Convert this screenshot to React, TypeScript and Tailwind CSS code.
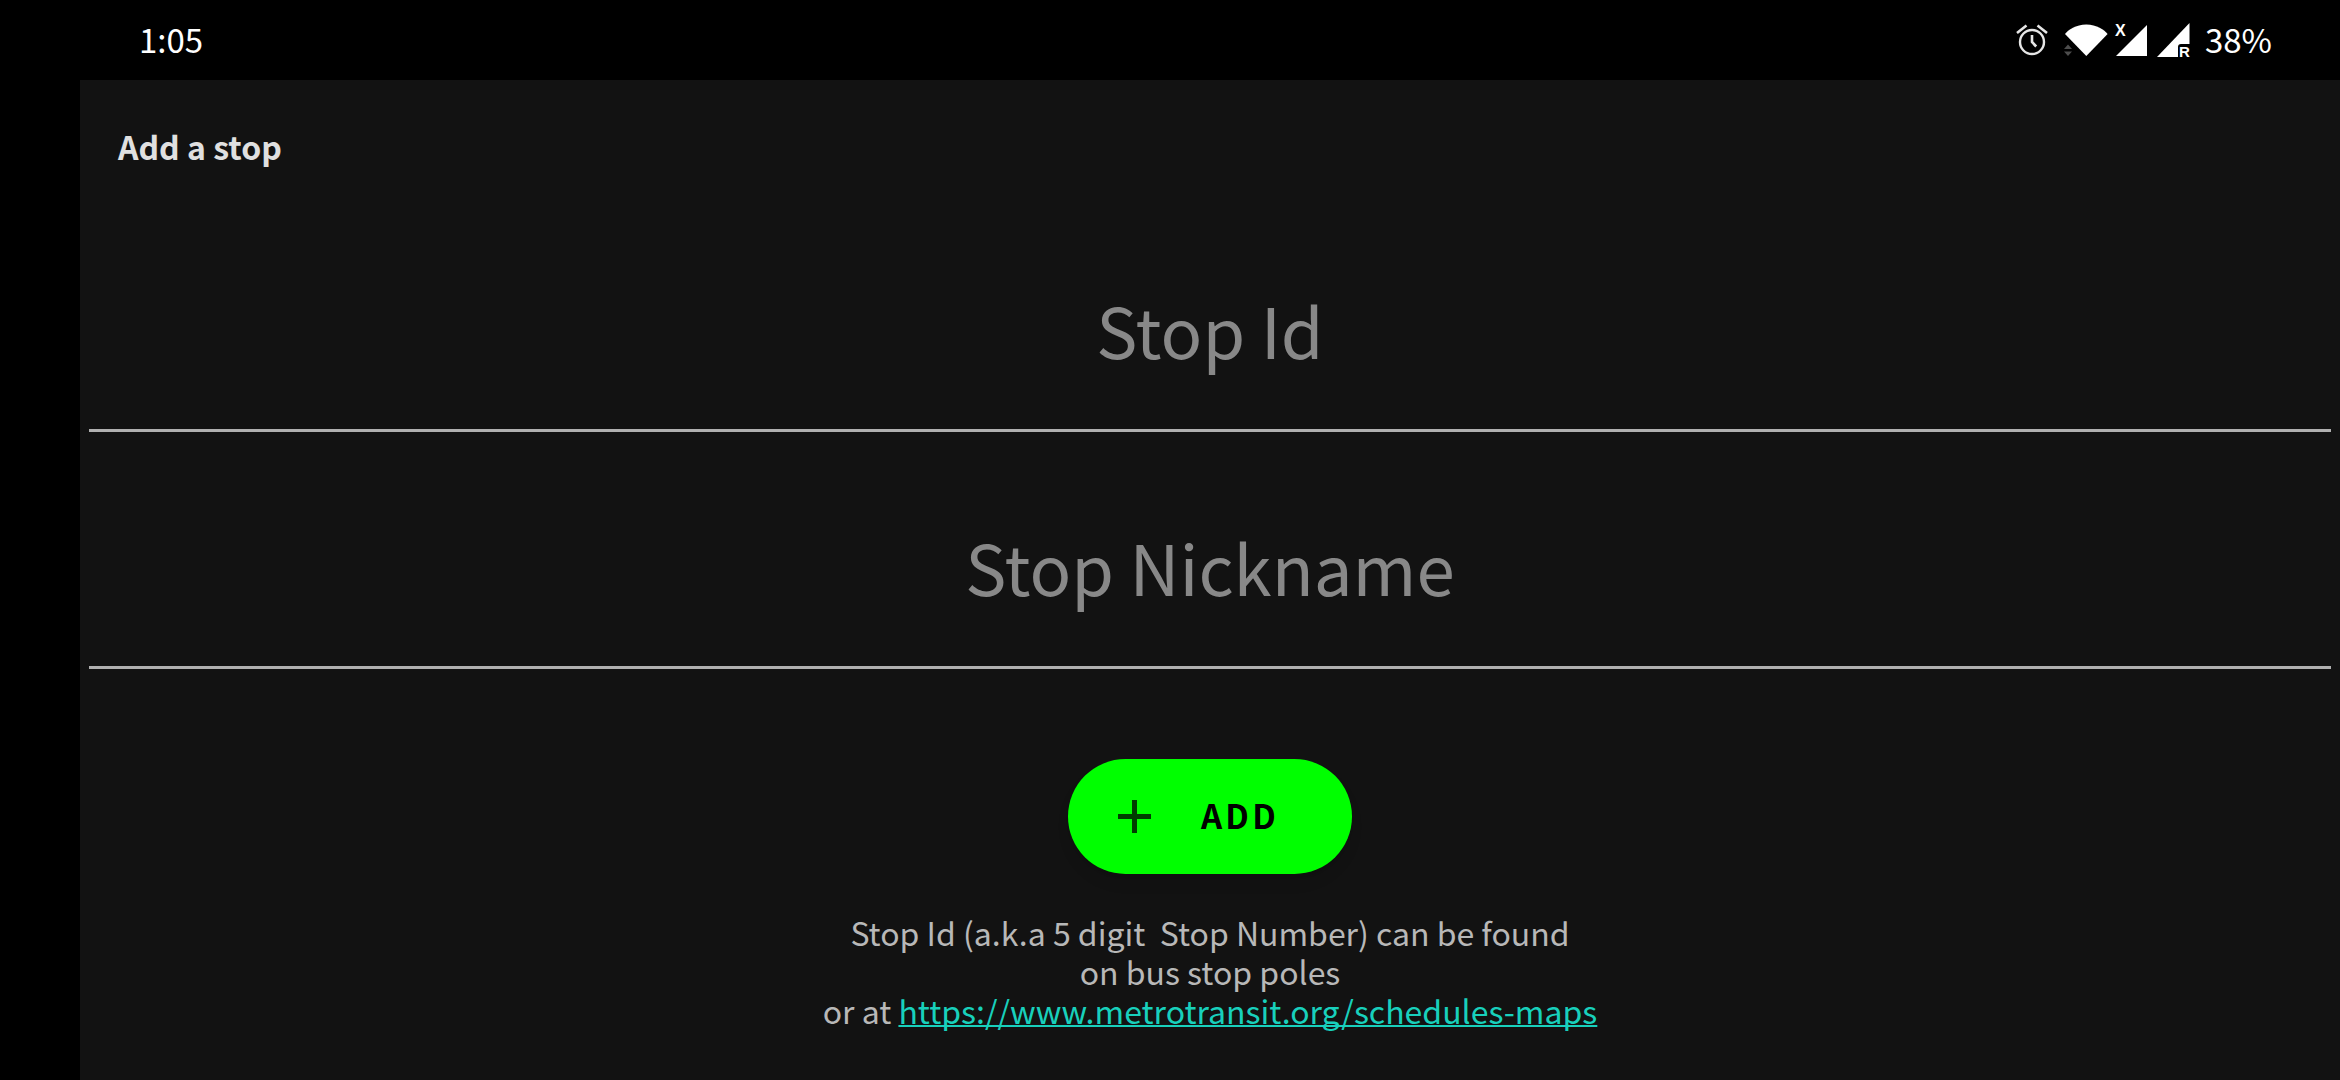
import React from "react";

function AlarmIcon() {
  return (
    <svg width="32" height="32" viewBox="0 0 32 32" fill="none" stroke="#e6e6e6" aria-hidden="true">
      <circle cx="16" cy="18" r="12" strokeWidth="2.4" />
      <path d="M16 11V18L20.200 22.500" strokeWidth="2.600" />
      <path d="M1 9L10.500 1.500M31 9L21.500 1.500" strokeWidth="2.600" />
    </svg>
  );
}

function WifiIcon() {
  return (
    <svg width="44" height="34" viewBox="0 0 44 34" aria-hidden="true">
      <path d="M1 11C4 7 12 1.500 22.300 1.500S40.500 7 43.600 11L22.300 33Z" fill="#fff" />
      <path d="M0 26L4 21.500L8 26ZM0 28.500H8L4 33Z" fill="#4d4d4d" />
    </svg>
  );
}

function SignalNoDataIcon() {
  return (
    <svg width="33" height="34" viewBox="0 0 33 34" className="overflow-visible" aria-hidden="true">
      <path d="M1 33L32 2V33Z" fill="#fff" />
      <text x="0" y="13" fill="#fff" className="font-['Liberation_Sans',sans-serif] text-[16px] font-bold">X</text>
    </svg>
  );
}

function SignalRoamingIcon() {
  return (
    <svg width="33" height="34" viewBox="0 0 33 34" className="overflow-visible" aria-hidden="true">
      <path d="M0 34L32.500 0V34Z" fill="#fff" />
      <path d="M21 34V24Q21 21 24 21H33V34Z" fill="#000" />
      <text x="22" y="34" fill="#fff" className="font-['Liberation_Sans',sans-serif] text-[15px] font-bold">R</text>
    </svg>
  );
}

function PlusIcon() {
  return (
    <svg width="33" height="33" viewBox="0 0 33 33" fill="none" stroke="#003c00" strokeWidth="5" aria-hidden="true">
      <path d="M0 16.500H33M16.500 0V33" />
    </svg>
  );
}

function StopField({ label }: { label: string }) {
  return (
    <input
      type="text"
      aria-label={label}
      placeholder={label}
      className="h-[164px] w-full border-b-3 border-[#b0b0b0] bg-transparent pb-10 text-center text-[69px] text-white outline-none placeholder:text-[#888]"
    />
  );
}

export default function App() {
  return (
    <div className="flex min-h-screen flex-col bg-black font-['Noto_Sans_CJK_SC','Noto_Sans',sans-serif]">
      <header className="flex h-20 items-center justify-between pr-17 pl-[139px] text-[33px] leading-10 text-white">
        <time className="pb-0.5">1:05</time>
        <div className="flex items-center">
          <AlarmIcon />
          <div className="ml-4 flex items-center gap-[7px]">
            <WifiIcon />
            <SignalNoDataIcon />
            <div className="ml-0.5">
              <SignalRoamingIcon />
            </div>
          </div>
          <span className="ml-[15px] pb-0.5">38%</span>
        </div>
      </header>
      <main className="ml-20 flex grow flex-col bg-[#121212]">
        <h1 className="px-[38px] pt-[42px] text-[32px] leading-12 font-bold text-[#e0e0e0]">Add a stop</h1>
        <form className="flex flex-col items-center px-[9px] pt-[98px]" onSubmit={(e) => e.preventDefault()}>
          <div className="flex w-full flex-col gap-[73px]">
            <StopField label="Stop Id" />
            <StopField label="Stop Nickname" />
          </div>
          <button
            type="submit"
            className="mt-[90px] flex h-[115px] items-center gap-[50px] rounded-full bg-[#00ff00] pr-[73px] pl-[50px] text-[33px] font-bold tracking-widest text-black shadow-lg"
          >
            <PlusIcon />
            <span className="pb-0.5">ADD</span>
          </button>
        </form>
        <p className="mt-[39px] text-center text-[32px] leading-[39px] whitespace-pre-wrap text-[#b8b8b8]">
          Stop Id (a.k.a 5 digit{"  "}Stop Number) can be found
          <br />
          on bus stop poles
          <br />
          or at{" "}
          <a
            href="https://www.metrotransit.org/schedules-maps"
            className="text-[#18d0bc] underline decoration-2 [text-decoration-skip-ink:none]"
          >
            https://www.metrotransit.org/schedules-maps
          </a>
        </p>
      </main>
    </div>
  );
}
